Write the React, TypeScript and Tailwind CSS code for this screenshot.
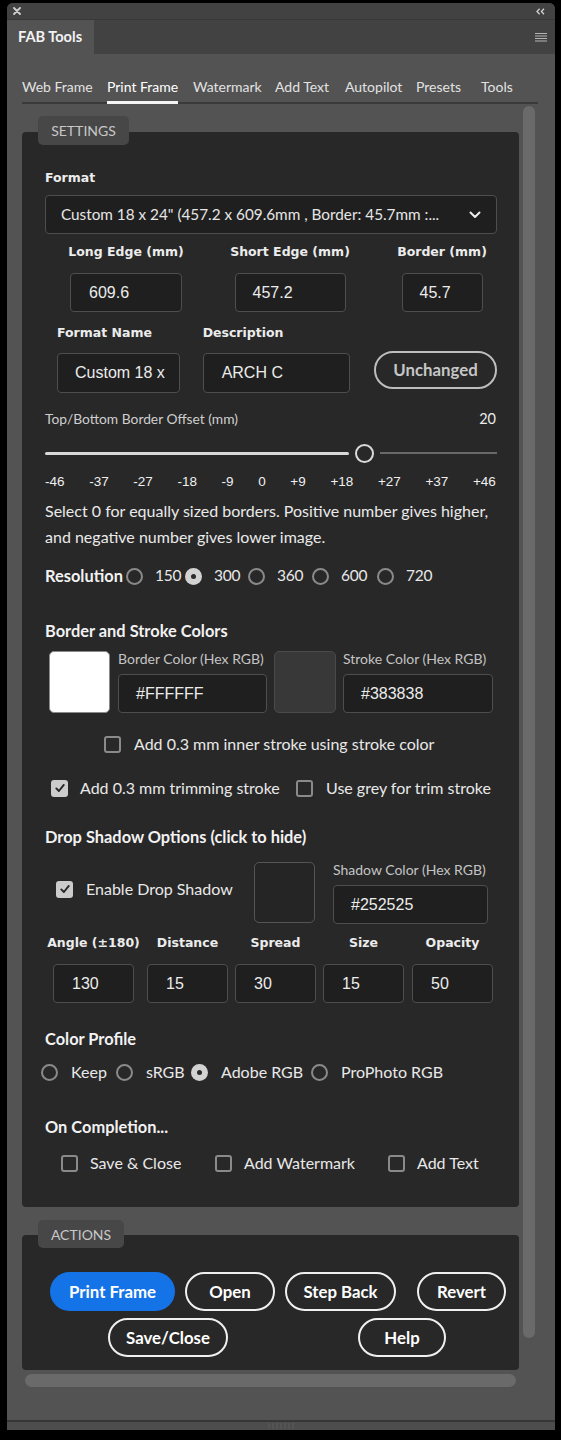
import React from "react";

const UI = "font-['Lato',sans-serif]";
const DV = "font-['DejaVu_Sans',sans-serif] font-bold text-[12.5px] text-[#ececec]";
const LS = "font-['Liberation_Sans',Arial,sans-serif]";
const H = "text-[16.4px] font-bold text-[#f2f2f2]";

function Radio({ checked }: { checked?: boolean }) {
  if (checked) {
    return (
      <span className="flex h-[17px] w-[17px] shrink-0 items-center justify-center rounded-full bg-[#d2d2d2]">
        <span className="h-[5px] w-[5px] rounded-full bg-[#2a2a2a]" />
      </span>
    );
  }
  return <span className="block h-[17px] w-[17px] shrink-0 rounded-full border-2 border-[#8a8a8a]" />;
}

function Check({ checked }: { checked?: boolean }) {
  if (checked) {
    return (
      <span className="flex h-[17px] w-[17px] shrink-0 items-center justify-center rounded-[3px] bg-[#cccccc]">
        <svg viewBox="0 0 12 12" className="h-[12px] w-[12px]">
          <path d="M2.3 6.4 L4.9 9 L9.8 2.9" fill="none" stroke="#262626" strokeWidth="1.9" strokeLinecap="round" strokeLinejoin="round" />
        </svg>
      </span>
    );
  }
  return <span className="block h-[17px] w-[17px] shrink-0 rounded-[3px] border-2 border-[#8a8a8a]" />;
}

function Field({ value, className = "" }: { value: string; className?: string }) {
  return (
    <div
      className={`flex h-[39px] items-center overflow-hidden whitespace-nowrap rounded-[4px] border border-[#4e4e4e] bg-[#1f1f1f] pl-[17px] ${LS} text-[16px] text-[#ececec] ${className}`}
    >
      {value}
    </div>
  );
}

function Pill({ label, w, primary }: { label: string; w: string; primary?: boolean }) {
  return (
    <div
      className={`flex h-[39px] items-center justify-center rounded-full ${w} text-[16.8px] font-bold ${
        primary ? "bg-[#1473e6] text-white" : "border-2 border-[#f0f0f0] text-white"
      }`}
    >
      {label}
    </div>
  );
}

const tabs = [
  { t: "Web Frame", w: "w-[85px]" },
  { t: "Print Frame", w: "w-[86px]", active: true },
  { t: "Watermark", w: "w-[82px]" },
  { t: "Add Text", w: "w-[70px]" },
  { t: "Autopilot", w: "w-[71px]" },
  { t: "Presets", w: "w-[65px]" },
  { t: "Tools", w: "w-[40px]" },
];

export default function App() {
  return (
    <div className={`${UI} h-[1440px] w-[561px] overflow-hidden bg-black pt-[3px]`}>
      <div className="ml-[7px] flex h-[1427px] w-[548px] flex-col overflow-hidden rounded-t-[6px] bg-[#535353]">
        {/* top strip */}
        <div className="flex h-[17px] items-center justify-between border-b border-[#383838] bg-[#424242] pl-[6px] pr-[10px]">
          <svg viewBox="0 0 8 8" className="h-[8px] w-[8px]">
            <path d="M1 1 L7 7 M7 1 L1 7" stroke="#cfcfcf" strokeWidth="1.8" strokeLinecap="round" />
          </svg>
          <svg viewBox="0 0 9 7" className="h-[7px] w-[9px]">
            <path d="M3.6 0.8 L1 3.5 L3.6 6.2 M8 0.8 L5.4 3.5 L8 6.2" fill="none" stroke="#cfcfcf" strokeWidth="1.3" />
          </svg>
        </div>
        {/* header */}
        <div className="flex h-[34px] bg-[#424242]">
          <div className="flex w-[87px] items-center bg-[#535353] pl-[11px] text-[14.6px] font-bold text-[#f2f2f2]">
            FAB Tools
          </div>
          <div className="flex flex-1 items-center justify-end pr-[8px]">
            <svg viewBox="0 0 12 9" className="h-[9px] w-[12px]">
              <path d="M0 0.5 H12 M0 3 H12 M0 5.5 H12 M0 8 H12" stroke="#b4b4b4" strokeWidth="1" />
            </svg>
          </div>
        </div>
        {/* body */}
        <div className="flex flex-1 flex-col pl-[15px]">
          <div className="flex w-[516px] border-b-2 border-[#3a3a3a] pt-[20px]">
            {tabs.map((tb) => (
              <div key={tb.t} className={`${tb.w} shrink-0`}>
                <span
                  className={`-mb-[2px] inline-block whitespace-nowrap border-b-[3px] pb-[4px] text-[14px] leading-[20px] ${
                    tb.active ? "border-[#f4f4f4] text-white" : "border-transparent text-[#e2e2e2]"
                  }`}
                >
                  {tb.t}
                </span>
              </div>
            ))}
          </div>

          <div className="flex">
            <div className="flex w-[497px] flex-col">
              {/* SETTINGS */}
              <div className="relative z-10 ml-[16px] mt-[12px] flex h-[29px] w-[91px] items-center justify-center rounded-[5px] bg-[#474747] text-[14px] text-[#c8c8c8]">
                SETTINGS
              </div>
              <div className="-mt-[13px] rounded-[4px] bg-[#282828] pb-[32px] pl-[23px] pr-[22px] pt-[36px] text-[#e8e8e8]">
                <div className={`${DV} flex h-[20px] items-center`}>Format</div>
                <div className="mt-[7px] flex h-[39px] items-center justify-between rounded-[4px] border border-[#4e4e4e] bg-[#1f1f1f] pl-[15px] pr-[15px]">
                  <span className="whitespace-nowrap text-[15.3px] text-[#e6e6e6]">
                    Custom 18 x 24" (457.2 x 609.6mm , Border: 45.7mm :...
                  </span>
                  <svg viewBox="0 0 12 8" className="h-[8px] w-[12px]">
                    <path d="M1.5 1.5 L6 6 L10.5 1.5" fill="none" stroke="#ececec" strokeWidth="2" strokeLinecap="round" strokeLinejoin="round" />
                  </svg>
                </div>

                {/* row 1 */}
                <div className="mt-[8px] flex">
                  <div className="flex w-[162px] flex-col items-center">
                    <div className={`${DV} h-[20px] whitespace-nowrap leading-[20px]`}>Long Edge (mm)</div>
                    <Field value="609.6" className="mt-[11px] w-[112px] pl-[18px]" />
                  </div>
                  <div className="flex w-[166px] flex-col items-center">
                    <div className={`${DV} h-[20px] whitespace-nowrap leading-[20px]`}>Short Edge (mm)</div>
                    <Field value="457.2" className="mt-[11px] w-[111px]" />
                  </div>
                  <div className="ml-[14px] flex w-[110px] flex-col items-center">
                    <div className={`${DV} h-[20px] whitespace-nowrap leading-[20px]`}>Border (mm)</div>
                    <Field value="45.7" className="mt-[11px] w-[81px]" />
                  </div>
                </div>

                {/* row 2 */}
                <div className="mt-[11px] flex pl-[12px]">
                  <div className="w-[124px]">
                    <div className={`${DV} h-[20px] whitespace-nowrap leading-[20px]`}>Format Name</div>
                    <Field value="Custom 18 x" className="mt-[10px] h-[40px]" />
                  </div>
                  <div className="ml-[23px] w-[149px]">
                    <div className={`${DV} h-[20px] whitespace-nowrap leading-[20px]`}>Description</div>
                    <Field value="ARCH C" className="mt-[10px] h-[40px] pl-[18px]" />
                  </div>
                  <div className="ml-[24px] pt-[28px]">
                    <div className="flex h-[38px] w-[123px] items-center justify-center rounded-full border-2 border-[#bdbdbd] text-[16.8px] font-bold text-[#c6c6c6]">
                      Unchanged
                    </div>
                  </div>
                </div>

                {/* offset */}
                <div className="mt-[16px] flex h-[20px] items-center justify-between pr-[1px] text-[13.8px] text-[#cfcfcf]">
                  <span>Top/Bottom Border Offset (mm)</span>
                  <span className="text-[14.5px] text-[#ececec]">20</span>
                </div>
                <div className="mt-[14px] flex h-[20px] items-center">
                  <div className="h-[3px] w-[304px] rounded-full bg-[#d8d8d8]" />
                  <div className="ml-[6px] h-[19px] w-[19px] rounded-full border-[2.5px] border-[#dadada] bg-[#282828]" />
                  <div className="ml-[6px] h-[2px] flex-1 bg-[#686868]" />
                </div>
                <div className={`mt-[11px] flex h-[16px] items-center justify-between pr-[1px] ${LS} text-[13.5px] text-[#f0f0f0]`}>
                  {["-46", "-37", "-27", "-18", "-9", "0", "+9", "+18", "+27", "+37", "+46"].map((n) => (
                    <span key={n}>{n}</span>
                  ))}
                </div>
                <div className="mt-[8px] whitespace-nowrap text-[16px] leading-[26px] text-[#eaeaea]">
                  <div>Select 0 for equally sized borders. Positive number gives higher,</div>
                  <div>and negative number gives lower image.</div>
                </div>

                {/* resolution */}
                <div className="mt-[14px] flex h-[24px] items-center text-[15.5px] tracking-[-0.3px]">
                  <div className={`w-[81px] tracking-normal ${H}`}>Resolution</div>
                  {[
                    { v: "150", w: "w-[59px]" },
                    { v: "300", w: "w-[63px]", c: true },
                    { v: "360", w: "w-[64px]" },
                    { v: "600", w: "w-[65px]" },
                    { v: "720", w: "w-[60px]" },
                  ].map((r) => (
                    <div key={r.v} className={`flex ${r.w} items-center gap-[12px]`}>
                      <Radio checked={r.c} />
                      <span>{r.v}</span>
                    </div>
                  ))}
                </div>

                {/* border and stroke */}
                <div className={`mt-[32px] flex h-[22px] items-center ${H}`}>Border and Stroke Colors</div>
                <div className="mt-[9px] flex h-[62px]">
                  <div className="ml-[4px] h-[62px] w-[61px] rounded-[5px] border border-[#8a8a8a] bg-white" />
                  <div className="ml-[8px] w-[149px]">
                    <div className="h-[16px] whitespace-nowrap text-[14px] leading-[16px] text-[#c4c4c4]">Border Color (Hex RGB)</div>
                    <Field value="#FFFFFF" className="mt-[7px]" />
                  </div>
                  <div className="ml-[7px] h-[62px] w-[62px] rounded-[5px] border border-[#4a4a4a] bg-[#383838]" />
                  <div className="ml-[7px] w-[150px]">
                    <div className="h-[16px] whitespace-nowrap text-[14px] leading-[16px] text-[#c4c4c4]">Stroke Color (Hex RGB)</div>
                    <Field value="#383838" className="mt-[7px]" />
                  </div>
                </div>
                <div className="ml-[59px] mt-[19px] flex h-[24px] items-center gap-[13px] text-[16px]">
                  <Check />
                  <span className="whitespace-nowrap">Add 0.3 mm inner stroke using stroke color</span>
                </div>
                <div className="ml-[6px] mt-[20px] flex h-[24px] items-center text-[16px]">
                  <div className="flex w-[245px] items-center gap-[12px]">
                    <Check checked />
                    <span className="whitespace-nowrap">Add 0.3 mm trimming stroke</span>
                  </div>
                  <div className="flex items-center gap-[13px]">
                    <Check />
                    <span className="whitespace-nowrap">Use grey for trim stroke</span>
                  </div>
                </div>

                {/* drop shadow */}
                <div className={`mt-[26px] flex h-[22px] items-center ${H}`}>Drop Shadow Options (click to hide)</div>
                <div className="mt-[14px] flex h-[62px]">
                  <div className="ml-[11px] mt-[15px] flex h-[24px] w-[198px] items-center gap-[13px] text-[16px]">
                    <Check checked />
                    <span className="whitespace-nowrap">Enable Drop Shadow</span>
                  </div>
                  <div className="h-[61px] w-[61px] rounded-[5px] border border-[#555555] bg-[#252525]" />
                  <div className="ml-[18px] w-[155px]">
                    <div className="h-[16px] whitespace-nowrap text-[14px] leading-[16px] text-[#c4c4c4]">Shadow Color (Hex RGB)</div>
                    <Field value="#252525" className="mt-[7px]" />
                  </div>
                </div>
                <div className="mt-[9px] flex">
                  {[
                    { l: "Angle (±180)", v: "130", m: "ml-[8px]" },
                    { l: "Distance", v: "15", m: "ml-[13px]" },
                    { l: "Spread", v: "30", m: "ml-[7px]" },
                    { l: "Size", v: "15", m: "ml-[7px]" },
                    { l: "Opacity", v: "50", m: "ml-[8px]" },
                  ].map((c) => (
                    <div key={c.l} className={`${c.m} flex w-[81px] flex-col items-center`}>
                      <div className={`${DV} h-[20px] whitespace-nowrap leading-[20px]`}>{c.l}</div>
                      <Field value={c.v} className="mt-[11px] w-full pl-[18px]" />
                    </div>
                  ))}
                </div>

                {/* color profile */}
                <div className={`mt-[25px] flex h-[22px] items-center ${H}`}>Color Profile</div>
                <div className="-ml-[4px] mt-[10px] flex h-[24px] items-center text-[16px]">
                  {[
                    { v: "Keep", w: "w-[75px]" },
                    { v: "sRGB", w: "w-[75px]" },
                    { v: "Adobe RGB", w: "w-[120px]", c: true },
                    { v: "ProPhoto RGB", w: "w-[140px]" },
                  ].map((r) => (
                    <div key={r.v} className={`flex ${r.w} items-center gap-[13px]`}>
                      <Radio checked={r.c} />
                      <span className="whitespace-nowrap">{r.v}</span>
                    </div>
                  ))}
                </div>

                {/* on completion */}
                <div className={`mt-[32px] flex h-[22px] items-center ${H}`}>On Completion...</div>
                <div className="ml-[16px] mt-[13px] flex h-[24px] items-center text-[16px]">
                  {[
                    { v: "Save & Close", w: "w-[154px]" },
                    { v: "Add Watermark", w: "w-[173px]" },
                    { v: "Add Text", w: "w-[100px]" },
                  ].map((r) => (
                    <div key={r.v} className={`flex ${r.w} items-center gap-[12px]`}>
                      <Check />
                      <span className="whitespace-nowrap">{r.v}</span>
                    </div>
                  ))}
                </div>
              </div>

              {/* ACTIONS */}
              <div className="relative z-10 ml-[16px] mt-[13px] flex h-[28px] w-[86px] items-center justify-center rounded-[5px] bg-[#474747] text-[14px] text-[#c8c8c8]">
                ACTIONS
              </div>
              <div className="-mt-[13px] rounded-[4px] bg-[#282828] pb-[13px] pt-[37px]">
                <div className="flex">
                  <div className="ml-[28px]"><Pill label="Print Frame" w="w-[125px]" primary /></div>
                  <div className="ml-[10px]"><Pill label="Open" w="w-[90px]" /></div>
                  <div className="ml-[10px]"><Pill label="Step Back" w="w-[111px]" /></div>
                  <div className="ml-[21px]"><Pill label="Revert" w="w-[89px]" /></div>
                </div>
                <div className="mt-[7px] flex">
                  <div className="ml-[86px]"><Pill label="Save/Close" w="w-[120px]" /></div>
                  <div className="ml-[130px]"><Pill label="Help" w="w-[88px]" /></div>
                </div>
              </div>
              <div className="ml-[3px] mt-[4px] h-[13px] w-[491px] rounded-full bg-[#6a6a6a]" />
            </div>
            <div className="ml-[4px] mt-[2px] h-[1232px] w-[12px] rounded-full bg-[#6a6a6a]" />
          </div>
        </div>
        {/* footer */}
        <div className="flex h-[10px] items-center justify-center border-t-2 border-[#363636] bg-[#4d4d4d]">
          <svg viewBox="0 0 26 6" className="h-[6px] w-[26px]">
            <path d="M1 0 V6 M5 0 V6 M9 0 V6 M13 0 V6 M17 0 V6 M21 0 V6 M25 0 V6" stroke="#5c5c5c" strokeWidth="1" />
          </svg>
        </div>
      </div>
    </div>
  );
}
